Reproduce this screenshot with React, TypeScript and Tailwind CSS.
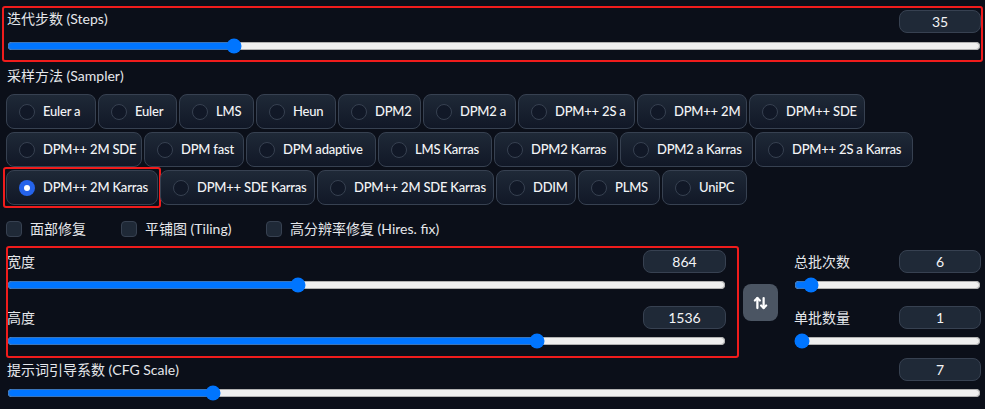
import { useState } from "react";

const rows = [
    [
        { name: "Euler a", w: "w-[90px]" },
        { name: "Euler", w: "w-[79px]" },
        { name: "LMS", w: "w-[75px]" },
        { name: "Heun", w: "w-[80px]" },
        { name: "DPM2", w: "w-[83px]" },
        { name: "DPM2 a", w: "w-[93px]" },
        { name: "DPM++ 2S a", w: "w-[117px]" },
        { name: "DPM++ 2M", w: "w-[110px]" },
        { name: "DPM++ SDE", w: "w-[116px]" },
    ],
    [
        { name: "DPM++ 2M SDE", w: "w-[136px]" },
        { name: "DPM fast", w: "w-[100px]" },
        { name: "DPM adaptive", w: "w-[130px]" },
        { name: "LMS Karras", w: "w-[114px]" },
        { name: "DPM2 Karras", w: "w-[124px]" },
        { name: "DPM2 a Karras", w: "w-[133px]" },
        { name: "DPM++ 2S a Karras", w: "w-[158px]" },
    ],
    [
        { name: "DPM++ 2M Karras", w: "w-[152px]" },
        { name: "DPM++ SDE Karras", w: "w-[155px]" },
        { name: "DPM++ 2M SDE Karras", w: "w-[177px]" },
        { name: "DDIM", w: "w-[80px]" },
        { name: "PLMS", w: "w-[82px]" },
        { name: "UniPC", w: "w-[85px]" },
    ],
];

export default function App() {
    const [sampler, setSampler] = useState("DPM++ 2M Karras");
    const [steps, setSteps] = useState(35);
    const [width, setWidth] = useState(864);
    const [height, setHeight] = useState(1536);
    const [batchCount, setBatchCount] = useState(6);
    const [batchSize, setBatchSize] = useState(1);
    const [cfg, setCfg] = useState(7);

    return (
        <main className="min-h-screen bg-[#0b0f19] pl-[7px] pr-[4px] pt-[10px] text-[14px] text-gray-200 font-['Lato','Noto_Sans_CJK_SC',sans-serif]">

            {/* STEPS */}
            <section className="relative">
                <Header label="迭代步数 (Steps)" value={steps} />
                <Slider min={1} max={150} value={steps} onChange={setSteps} />
                <Mark className="-left-[5px] -right-[2px] -top-[4px] -bottom-[8px]" />
            </section>

            {/* SAMPLER */}
            <div className="mt-[12px] leading-5">采样方法 (Sampler)</div>
            <div className="mt-[8px] -ml-[1px] flex flex-col gap-y-[3px]">
                {rows.map((row, i) => (
                    <div key={i} className="flex gap-x-[2px]">
                        {row.map((s) => (
                            <Radio
                                key={s.name}
                                name={s.name}
                                w={s.w}
                                checked={sampler === s.name}
                                onClick={() => setSampler(s.name)}
                            />
                        ))}
                    </div>
                ))}
            </div>

            {/* CHECKBOXES */}
            <div className="mt-[16px] -ml-[1px] flex items-center h-4">
                <Check label="面部修复" className="w-[115px]" />
                <Check label="平铺图 (Tiling)" className="w-[145px]" />
                <Check label="高分辨率修复 (Hires. fix)" />
            </div>

            {/* SIZE + BATCH */}
            <div className="mt-[13px] flex">
                <div className="relative w-[719px]">
                    <Header label="宽度" value={width} boxW="w-[83px]" center />
                    <Slider min={64} max={2048} value={width} onChange={setWidth} className="mt-[4px]" />
                    <div className="mt-[13px]">
                        <Header label="高度" value={height} boxW="w-[83px]" center />
                    </div>
                    <Slider min={64} max={2048} value={height} onChange={setHeight} className="mt-[4px]" />
                    <Mark className="-left-[1px] -right-[13px] -top-[4px] -bottom-[9px]" />
                </div>

                <button className="ml-[17px] mt-[34px] w-[35px] h-[37px] rounded-lg bg-[#4b5563] flex items-center justify-center">
                    <svg width="15" height="16" viewBox="0 0 24 24" fill="none" stroke="white" strokeWidth="3.6" strokeLinecap="round" strokeLinejoin="round">
                        <path d="m21 16-4 4-4-4" />
                        <path d="M17 20V4" />
                        <path d="m3 8 4-4 4 4" />
                        <path d="M7 4v16" />
                    </svg>
                </button>

                <div className="ml-[16px] flex-1">
                    <Header label="总批次数" value={batchCount} center />
                    <Slider min={1} max={100} value={batchCount} onChange={setBatchCount} className="mt-[4px]" />
                    <div className="mt-[13px]">
                        <Header label="单批数量" value={batchSize} center />
                    </div>
                    <Slider min={1} max={8} value={batchSize} onChange={setBatchSize} className="mt-[4px]" />
                </div>
            </div>

            {/* CFG */}
            <div className="mt-[9px]">
                <Header label="提示词引导系数 (CFG Scale)" value={cfg} center />
                <Slider min={1} max={30} step={0.5} value={cfg} onChange={setCfg} className="mt-[4px]" />
            </div>

        </main>
    );
}

/* Label + number box */

function Header({ label, value, boxW = "w-[82px]", center }: { label: string; value: number; boxW?: string; center?: boolean }) {
    return (
        <div className={`flex justify-between ${center ? "items-center" : "items-start"}`}>
            <span className="leading-[18px]">{label}</span>
            <div className={`${boxW} h-[23px] rounded-lg border border-[#374151] bg-[#1f2937] flex items-center justify-center text-[14px] text-gray-100`}>
                {value}
            </div>
        </div>
    );
}

function Slider({ min, max, step = 1, value, onChange, className = "mt-[5px]" }: { min: number; max: number; step?: number; value: number; onChange: (v: number) => void; className?: string }) {
    return (
        <input
            type="range"
            min={min}
            max={max}
            step={step}
            value={value}
            onChange={(e) => onChange(Number(e.target.value))}
            className={`block w-full h-4 m-0 accent-[#0075ff] ${className}`}
        />
    );
}

function Radio({ name, w, checked, onClick }: { name: string; w: string; checked: boolean; onClick: () => void }) {
    return (
        <div className={`relative ${w} shrink-0`}>
            <button
                onClick={onClick}
                className="w-full h-[35px] rounded-lg border border-[#374151] bg-linear-to-t from-[#111827] to-[#1f2937] flex items-center gap-[8px] pl-[12px] text-[13px] tracking-[-0.2px] font-medium text-gray-100 whitespace-nowrap"
            >
                {checked ? (
                    <span className="w-4 h-4 rounded-full bg-[#2563eb] flex items-center justify-center shrink-0">
                        <span className="w-[6px] h-[6px] rounded-full bg-white" />
                    </span>
                ) : (
                    <span className="w-4 h-4 rounded-full border border-[#374151] bg-[#111827] shrink-0" />
                )}
                {name}
            </button>
            {checked && <Mark className="-left-[3px] -right-[3px] -top-[3px] -bottom-[3px]" />}
        </div>
    );
}

function Check({ label, className = "" }: { label: string; className?: string }) {
    return (
        <label className={`flex items-center gap-[8px] ${className}`}>
            <span className="w-4 h-4 rounded-[4px] border border-[#374151] bg-[#1f2937] shrink-0" />
            <span className="leading-5">{label}</span>
        </label>
    );
}

/* red annotation box */

function Mark({ className }: { className: string }) {
    return <div className={`pointer-events-none absolute border-2 border-[#f01c1c] rounded-[3px] ${className}`} />;
}
